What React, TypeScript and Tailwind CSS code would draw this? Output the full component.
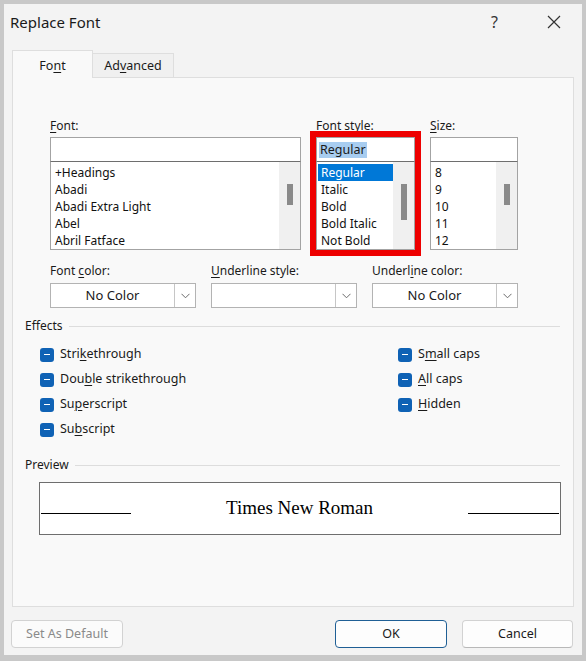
import React from "react"

const fontNames = ["+Headings", "Abadi", "Abadi Extra Light", "Abel", "Abril Fatface"]
const styles = ["Regular", "Italic", "Bold", "Bold Italic", "Not Bold"]
const sizes = ["8", "9", "10", "11", "12"]

function U({ children }: { children: React.ReactNode }) {
    return <span className="underline decoration-1 underline-offset-[2px]">{children}</span>
}

function Chevron() {
    return (
        <svg width="9" height="6" viewBox="0 0 9 6" fill="none">
            <path d="M0.5 0.8 L4.5 4.8 L8.5 0.8" stroke="#6b6b6b" strokeWidth="1" />
        </svg>
    )
}

function ListBox({ items, selected, thumbHeight }: { items: string[]; selected?: number; thumbHeight: number }) {
    return (
        <div className="h-[88px] border border-t-0 border-[#a3a3a3] bg-white flex">
            <div className="flex-1 pt-[2px] pl-[1px]">
                {items.map((item, i) => (
                    <div
                        key={item}
                        className={`h-[17px] leading-[17px] pl-[3px] text-[12px] ${i === selected ? "bg-[#0078d7] text-white" : "text-[#111]"}`}
                    >
                        {item}
                    </div>
                ))}
            </div>
            <div className="w-[21px] bg-[#f0f0f0] pt-[22px] flex justify-center">
                <div className="w-[6px] bg-[#8a8a8a]" style={{ height: thumbHeight }} />
            </div>
        </div>
    )
}

function Dropdown({ value }: { value?: string }) {
    return (
        <div className="w-[146px] h-[25px] border border-[#b3b3b3] bg-white flex">
            <div className="flex-1 flex items-center justify-center text-[13px] text-[#1a1a1a]">{value}</div>
            <div className="w-[21px] border-l border-[#c6c6c6] flex items-center justify-center">
                <Chevron />
            </div>
        </div>
    )
}

function Check({ children }: { children: React.ReactNode }) {
    return (
        <div className="h-[25px] flex items-center">
            <div className="w-[14px] h-[14px] rounded-[3px] bg-[#0f62b5] flex items-center justify-center">
                <div className="w-[6px] h-[1.5px] bg-white" />
            </div>
            <span className="ml-[6px] text-[12.5px] text-[#1a1a1a]">{children}</span>
        </div>
    )
}

export default function App() {
    return (
        <div className="w-[586px] h-[661px] bg-[#c8c8c8] pt-[4px] px-[4px] pb-[6px] font-['Noto_Sans',sans-serif] text-[12px] text-[#1a1a1a]">
            <div className="h-full bg-[#f3f3f3] flex flex-col">

                {/* Title bar */}
                <div className="h-[36px] flex items-center pl-[6px] pr-[21px]">
                    <span className="text-[15px] text-[#1a1a1a]">Replace Font</span>
                    <span className="ml-auto text-[16px] text-[#333]">?</span>
                    <svg className="ml-[49px]" width="14" height="14" viewBox="0 0 14 14">
                        <path d="M1 1 L13 13 M13 1 L1 13" stroke="#333" strokeWidth="1.2" />
                    </svg>
                </div>

                {/* Tabs */}
                <div className="mt-[10px] ml-[8px] flex items-end h-[28px] relative z-10 -mb-px">
                    <div className="w-[81px] h-[28px] pt-[3px] border border-b-0 border-[#dedede] bg-[#f9f9f9] flex items-center justify-center text-[12.5px]">
                        Fo<U>n</U>t
                    </div>
                    <div className="w-[81px] h-[25px] pt-[2px] border border-l-0 border-[#dedede] bg-[#f0f0f0] flex items-center justify-center text-[12.5px]">
                        Ad<U>v</U>anced
                    </div>
                </div>

                {/* Panel */}
                <div className="flex-1 mx-[8px] border border-[#dedede] bg-[#f9f9f9]">
                    <div className="pl-[37px] pt-[38px] flex gap-[15px]">
                        <div className="w-[251px]">
                            <div className="h-[19px] leading-[19px] mb-[2px]"><U>F</U>ont:</div>
                            <div className="h-[25px] border border-[#a3a3a3] border-b-[#6e6e6e] bg-white" />
                            <ListBox items={fontNames} thumbHeight={21} />
                        </div>
                        <div className="w-[99px]">
                            <div className="h-[19px] leading-[19px] mb-[2px]">Font st<U>y</U>le:</div>
                            <div className="relative">
                                <div className="h-[25px] border border-[#a3a3a3] border-b-[#6e6e6e] bg-white flex items-center pl-[2px]">
                                    <span className="bg-[#a8cdf0] h-[16px] leading-[16px] px-[1px] text-[12.5px]">Regular</span>
                                </div>
                                <ListBox items={styles} selected={0} thumbHeight={36} />
                                <div className="absolute -top-[6px] -left-[6px] -right-[6px] -bottom-[6px] border-[6px] border-[#ee0000] pointer-events-none" />
                            </div>
                        </div>
                        <div className="w-[88px]">
                            <div className="h-[19px] leading-[19px] mb-[2px]"><U>S</U>ize:</div>
                            <div className="h-[25px] border border-[#a3a3a3] border-b-[#6e6e6e] bg-white" />
                            <ListBox items={sizes} thumbHeight={21} />
                        </div>
                    </div>

                    <div className="pl-[37px] mt-[11px] flex gap-[15px]">
                        <div>
                            <div className="h-[19px] leading-[19px] mb-[3px]">Font <U>c</U>olor:</div>
                            <Dropdown value="No Color" />
                        </div>
                        <div>
                            <div className="h-[19px] leading-[19px] mb-[3px]"><U>U</U>nderline style:</div>
                            <Dropdown />
                        </div>
                        <div>
                            <div className="h-[19px] leading-[19px] mb-[3px]">Underl<U>i</U>ne color:</div>
                            <Dropdown value="No Color" />
                        </div>
                    </div>

                    {/* Effects */}
                    <div className="mt-[9px] pl-[12px] pr-[13px] flex items-center h-[18px]">
                        <span>Effects</span>
                        <div className="flex-1 h-px bg-[#dddddd] ml-[6px]" />
                    </div>
                    <div className="mt-[7px] pl-[27px] flex">
                        <div className="w-[358px]">
                            <Check>Stri<U>k</U>ethrough</Check>
                            <Check>Dou<U>b</U>le strikethrough</Check>
                            <Check>Su<U>p</U>erscript</Check>
                            <Check>Su<U>b</U>script</Check>
                        </div>
                        <div>
                            <Check>S<U>m</U>all caps</Check>
                            <Check><U>A</U>ll caps</Check>
                            <Check><U>H</U>idden</Check>
                        </div>
                    </div>

                    {/* Preview */}
                    <div className="mt-[14px] pl-[12px] pr-[13px] flex items-center h-[18px]">
                        <span>Preview</span>
                        <div className="flex-1 h-px bg-[#dddddd] ml-[6px]" />
                    </div>
                    <div className="mt-[8px] ml-[26px] mr-[12px] h-[53px] border border-[#6e6e6e] bg-white flex items-end justify-between px-px pb-[15px]">
                        <div className="w-[90px] h-px bg-black mb-[5px]" />
                        <span className="font-['Liberation_Serif',serif] text-[19px] leading-[22px] text-black">Times New Roman</span>
                        <div className="w-[91px] h-px bg-black mb-[5px]" />
                    </div>
                </div>

                {/* Buttons */}
                <div className="mt-[13px] mb-[7px] ml-[7px] mr-[9px] flex h-[28px]">
                    <button className="w-[112px] rounded-[4px] border border-[#d2d2d2] bg-[#fbfbfb] text-[12.5px] text-[#8a8a8a]">
                        Set As Default
                    </button>
                    <button className="ml-auto w-[112px] rounded-[4px] border border-[#1f5f95] bg-[#fdfdfd] text-[12.5px] text-[#1a1a1a]">
                        OK
                    </button>
                    <button className="ml-[15px] w-[111px] rounded-[4px] border border-[#d2d2d2] border-b-[#b8b8b8] bg-[#fdfdfd] text-[12.5px] text-[#1a1a1a]">
                        Cancel
                    </button>
                </div>
            </div>
        </div>
    )
}
